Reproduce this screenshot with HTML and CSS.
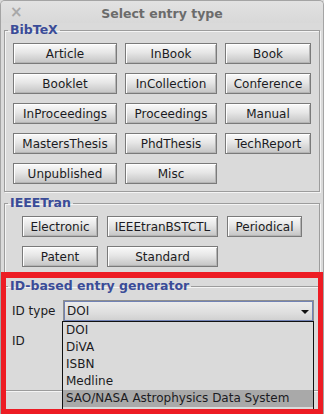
FILE: index.html
```html
<!DOCTYPE html>
<html>
<head>
<meta charset="utf-8">
<link rel="stylesheet" href="styles.css">
</head>
<body>
<div class="window">
  <div class="titlebar">
    <span class="close">×</span>
    <span class="title">Select entry type</span>
  </div>
  <fieldset class="group bibtex">
    <legend>BibTeX</legend>
    <div class="grid grid-bib">
      <button class="btn">Article</button>
      <button class="btn">InBook</button>
      <button class="btn">Book</button>
      <button class="btn">Booklet</button>
      <button class="btn">InCollection</button>
      <button class="btn">Conference</button>
      <button class="btn">InProceedings</button>
      <button class="btn">Proceedings</button>
      <button class="btn">Manual</button>
      <button class="btn">MastersThesis</button>
      <button class="btn">PhdThesis</button>
      <button class="btn">TechReport</button>
      <button class="btn">Unpublished</button>
      <button class="btn">Misc</button>
    </div>
  </fieldset>
  <fieldset class="group ieee">
    <legend>IEEETran</legend>
    <div class="grid grid-ieee">
      <button class="btn">Electronic</button>
      <button class="btn">IEEEtranBSTCTL</button>
      <button class="btn">Periodical</button>
      <button class="btn">Patent</button>
      <button class="btn">Standard</button>
    </div>
  </fieldset>
  <fieldset class="group idgen">
    <legend>ID-based entry generator</legend>
    <div class="idrows">
      <span class="lbl">ID type</span>
      <div class="combo"><span>DOI</span><span class="arrow"></span></div>
      <span class="lbl">ID</span>
      <div class="idfield"></div>
    </div>
  </fieldset>
  <ul class="popup">
    <li>DOI</li>
    <li>DiVA</li>
    <li>ISBN</li>
    <li>Medline</li>
    <li class="sel">SAO/NASA Astrophysics Data System</li>
  </ul>
  <div class="highlight"></div>
</div>
</body>
</html>
```

FILE: styles.css
```css
* { box-sizing: border-box; }
html, body {
  margin: 0;
  padding: 0;
  background: #dadada;
}
body {
  font-family: "DejaVu Sans", "Liberation Sans", sans-serif;
  font-size: 12px;
  color: #1b1b22;
}
.window {
  position: relative;
  width: 324px;
  height: 414px;
  overflow: hidden;
  background: #dadada;
  border: 1px solid #a4a4a4;
  border-bottom: none;
  border-radius: 5px 5px 0 0;
}
.titlebar {
  position: relative;
  height: 22px;
  display: flex;
  align-items: center;
  justify-content: center;
  background: linear-gradient(#e2e2e2, #d8d8d8);
}
.close {
  position: absolute;
  left: 9px;
  top: 3px;
  font-size: 15px;
  font-weight: bold;
  color: #a8a8a8;
  line-height: 16px;
}
.title {
  font-weight: bold;
  font-size: 12.5px;
  color: #6b6b6b;
  margin-top: 3px;
}
.group {
  margin: 0 3px 0 3px;
  padding: 6px 0 7px;
  border: 1px solid #9c9c9c;
  box-shadow: inset 1px 1px 0 #f4f4f4, 1px 1px 0 #f4f4f4;
  min-width: 0;
}
.group legend {
  margin-left: 3px;
  padding: 0 2px 0 2px;
  font-weight: bold;
  font-size: 12.5px;
  line-height: 14px;
  color: #3a4c98;
}
.bibtex { margin-top: 0; }
.ieee { margin-top: 4px; padding-bottom: 6px; }
.idgen { margin-top: 5px; padding-top: 7px; padding-bottom: 0; height: 112px; }
.grid {
  display: grid;
  justify-content: center;
  row-gap: 9px;
  column-gap: 8px;
  grid-auto-rows: 21px;
}
.grid-bib { grid-template-columns: 104px 92px 86px; }
.grid-ieee { grid-template-columns: 76px 111px 75px; column-gap: 9px; }
.btn {
  font: inherit;
  color: #1b1b22;
  margin: 0;
  padding: 0;
  height: 21px;
  border: 1px solid #7a7a7a;
  background: linear-gradient(#fafafa 0%, #e6e6e6 45%, #d0d0d0 80%, #c4c4c4 100%);
  box-shadow: inset 1px 1px 0 #ffffff, inset -1px -1px 0 #b4b4b4;
  text-align: center;
  white-space: nowrap;
}
.idrows {
  display: grid;
  grid-template-columns: 51px 251px;
  grid-template-rows: 22px 22px;
  row-gap: 8px;
  align-items: center;
  padding-left: 7px;
}
.lbl { font-size: 12px; }
.combo {
  height: 22px;
  display: flex;
  align-items: center;
  justify-content: space-between;
  padding: 0 4px 0 3px;
  border: 1px solid #8e8e8e;
  box-shadow: inset 0 0 0 1px #7182b4;
  background: linear-gradient(#ececec, #dedede 60%, #cfcfcf);
  font-size: 12px;
}
.arrow {
  width: 0;
  height: 0;
  border-left: 4px solid transparent;
  border-right: 4px solid transparent;
  border-top: 4px solid #111;
  margin-top: 2px;
}
.idfield { height: 22px; }
.popup {
  position: absolute;
  left: 61px;
  top: 320px;
  width: 252px;
  height: 120px;
  margin: 0;
  padding: 0;
  list-style: none;
  border: 1px solid #111;
  background: #dadada;
}
.popup li {
  height: 17px;
  line-height: 17px;
  padding-left: 3px;
  font-size: 12px;
  white-space: nowrap;
}
.popup li.sel { background: #a9a9a9; }
.highlight {
  position: absolute;
  left: -1px;
  top: 271px;
  width: 324px;
  height: 143px;
  border: 6px solid #ed1c24;
  pointer-events: none;
}
```
